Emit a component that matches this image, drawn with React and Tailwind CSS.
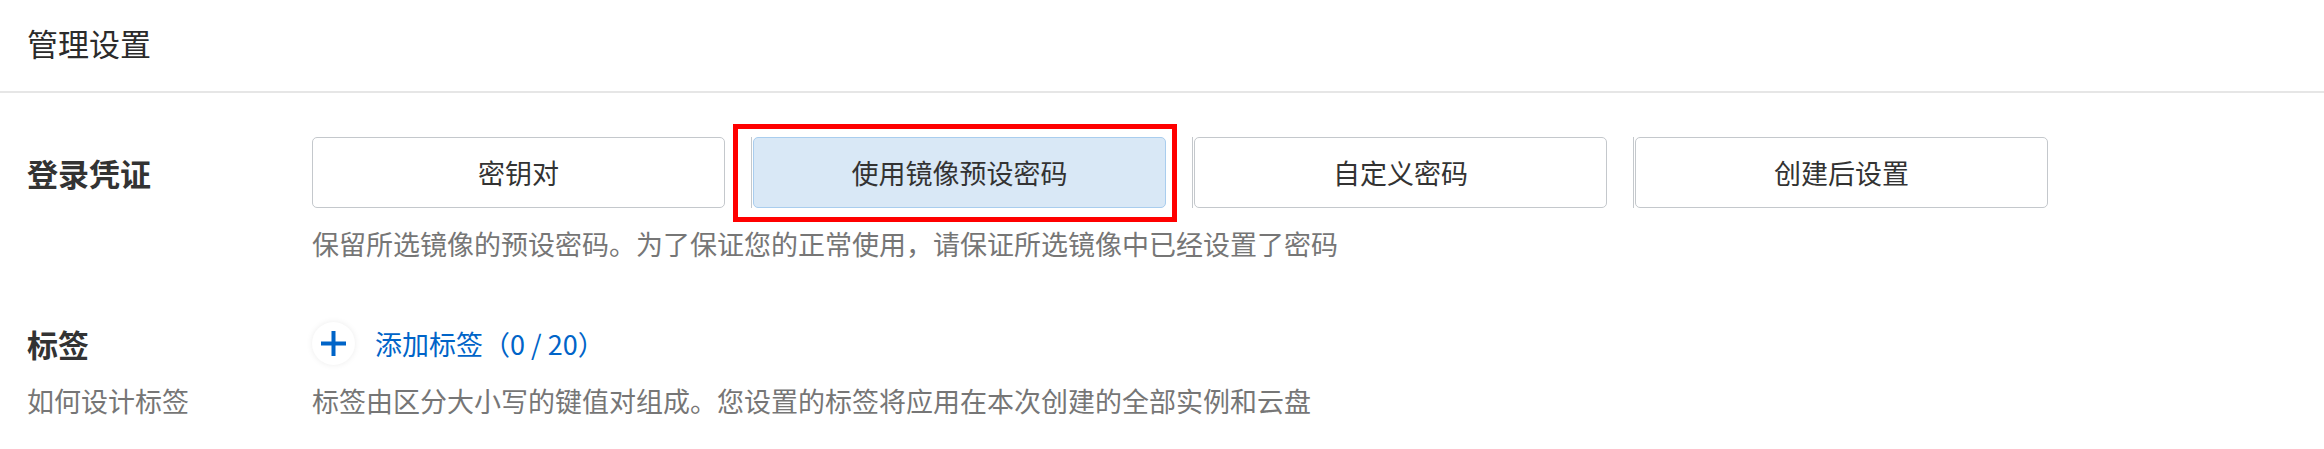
import { useState } from "react";

const font = "font-['Noto_Sans_CJK_SC','Noto_Sans',sans-serif]";

const options = [
  { key: "keypair", label: "密钥对" },
  { key: "image", label: "使用镜像预设密码" },
  { key: "custom", label: "自定义密码" },
  { key: "later", label: "创建后设置" },
];

const OptionButton = ({ option, active, onClick }) => (
  <button
    onClick={onClick}
    className={`w-[413px] h-[71px] rounded-[5px] border text-[27px] leading-[36px] text-[#333] ${
      active ? "bg-[#d9e8f6] border-[#a9cdee]" : "bg-white border-[#c4c8cc]"
    }`}
  >
    {option.label}
  </button>
);

const App = () => {
  const [selected, setSelected] = useState("image");

  return (
    <div className={`w-[2324px] h-[449px] bg-white ${font}`}>
      <div className="pt-[21px] pb-[26px] pl-[27px] border-b-2 border-[#e6e6e6]">
        <h1 className="text-[31px] leading-[44px] text-[#2b2b2b]">管理设置</h1>
      </div>

      <div className="pl-[27px] pt-[44px] grid grid-cols-[285px_1fr]">
        {/* 登录凭证 */}
        <div className="h-[71px] flex items-center">
          <span className="text-[31px] leading-[44px] font-bold text-[#333]">登录凭证</span>
        </div>
        <div className="flex gap-[26px]">
          {options.map((option, idx) =>
            idx === 0 ? (
              <OptionButton key={option.key} option={option} active={selected === option.key} onClick={() => setSelected(option.key)} />
            ) : (
              <div key={option.key} className="relative flex border-l border-[#c4c8cc] pl-px">
                <OptionButton option={option} active={selected === option.key} onClick={() => setSelected(option.key)} />
                {option.key === "image" && (
                  <div className="absolute -left-[19px] -top-[13px] -right-[11px] -bottom-[14px] border-[5px] border-[#ff0000] pointer-events-none" />
                )}
              </div>
            )
          )}
        </div>
        <div />
        <p className="mt-[18px] text-[27px] leading-[36px] text-[#767676]">
          保留所选镜像的预设密码。为了保证您的正常使用，请保证所选镜像中已经设置了密码
        </p>

        {/* 标签 */}
        <div className="mt-[60px] h-[43px] flex items-center">
          <span className="text-[31px] leading-[44px] font-bold text-[#333]">标签</span>
        </div>
        <div className="mt-[60px] h-[43px] flex items-center gap-[20px]">
          <span className="w-[43px] h-[43px] rounded-full bg-white shadow-[0_0_6px_rgba(0,0,0,0.08)] flex items-center justify-center">
            <svg width="25" height="25" viewBox="0 0 25 25">
              <rect x="10.5" y="0" width="4" height="25" fill="#0064c8" />
              <rect x="0" y="10.5" width="25" height="4" fill="#0064c8" />
            </svg>
          </span>
          <span className="text-[27px] leading-[36px] text-[#0064c8]">添加标签（0 / 20）</span>
        </div>
        <p className="mt-[18px] text-[27px] leading-[36px] text-[#767676]">如何设计标签</p>
        <p className="mt-[18px] text-[27px] leading-[36px] text-[#767676]">
          标签由区分大小写的键值对组成。您设置的标签将应用在本次创建的全部实例和云盘
        </p>
      </div>
    </div>
  );
};

export default App;
